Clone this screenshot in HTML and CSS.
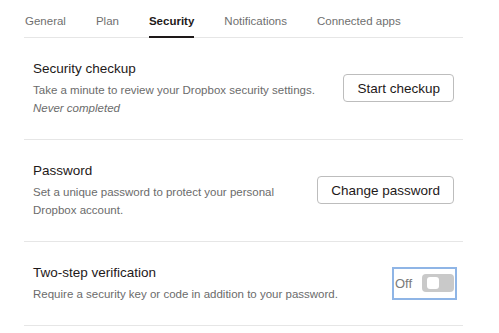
FILE: index.html
```html
<!DOCTYPE html>
<html lang="en">
<head>
<meta charset="utf-8">
<title>Security settings</title>
<link rel="stylesheet" href="styles.css">
</head>
<body>
<div class="page">
  <nav class="tabs">
    <span class="tab">General</span>
    <span class="tab">Plan</span>
    <span class="tab active">Security</span>
    <span class="tab">Notifications</span>
    <span class="tab">Connected apps</span>
  </nav>

  <section class="row">
    <div class="info">
      <div class="title">Security checkup</div>
      <div class="desc">Take a minute to review your Dropbox security settings.</div>
      <div class="desc note">Never completed</div>
    </div>
    <button class="btn" type="button">Start checkup</button>
  </section>

  <section class="row">
    <div class="info">
      <div class="title">Password</div>
      <div class="desc narrow">Set a unique password to protect your personal Dropbox account.</div>
    </div>
    <button class="btn" type="button">Change password</button>
  </section>

  <section class="row">
    <div class="info">
      <div class="title">Two-step verification</div>
      <div class="desc">Require a security key or code in addition to your password.</div>
    </div>
    <div class="toggle-wrap">
      <span class="toggle-label">Off</span>
      <span class="track"><span class="knob"></span></span>
    </div>
  </section>
</div>
</body>
</html>
```

FILE: styles.css
```css
html, body {
  margin: 0;
  padding: 0;
  background: #ffffff;
}

body {
  font-family: "Liberation Sans", Arial, sans-serif;
  color: #1e1919;
}

.page {
  margin-left: 24px;
  width: 439px;
}

.tabs {
  display: flex;
  gap: 30px;
  padding-left: 1px;
  border-bottom: 1px solid #e6e6e6;
}

.tab {
  font-size: 11.5px;
  line-height: 14px;
  padding: 14px 0 9px;
  color: #6f6f6f;
  border-bottom: 1px solid transparent;
  margin-bottom: -1px;
}

.tab.active {
  color: #1e1919;
  font-weight: 700;
  border-bottom: 2px solid #1e1919;
  padding-bottom: 8px;
}

.row {
  display: flex;
  align-items: center;
  justify-content: space-between;
  padding: 21px 9px 22px;
  border-bottom: 1px solid #e6e6e6;
}

.title {
  font-size: 13.5px;
  line-height: 20px;
  margin-bottom: 2px;
  color: #1e1919;
}

.desc {
  font-size: 11.5px;
  line-height: 18px;
  color: #6b6b6b;
}

.desc.narrow {
  width: 250px;
}

.note {
  font-style: italic;
}

.btn {
  font-family: "Liberation Sans", Arial, sans-serif;
  font-size: 13.5px;
  color: #1e1919;
  background: #ffffff;
  border: 1px solid #bdbdbd;
  border-radius: 4px;
  height: 28px;
  padding: 0 13px;
  cursor: pointer;
}

.toggle-wrap {
  display: flex;
  align-items: center;
  gap: 10px;
  height: 27px;
  outline: 2px solid #8fb5e6;
  outline-offset: 1px;
}

.toggle-label {
  font-size: 13px;
  color: #7a7a7a;
}

.track {
  display: flex;
  align-items: center;
  width: 32px;
  height: 18px;
  border-radius: 4px;
  background: #c9c9c9;
  padding-left: 5px;
  box-sizing: border-box;
}

.knob {
  width: 12px;
  height: 12px;
  border-radius: 3px;
  background: #ffffff;
}
```
